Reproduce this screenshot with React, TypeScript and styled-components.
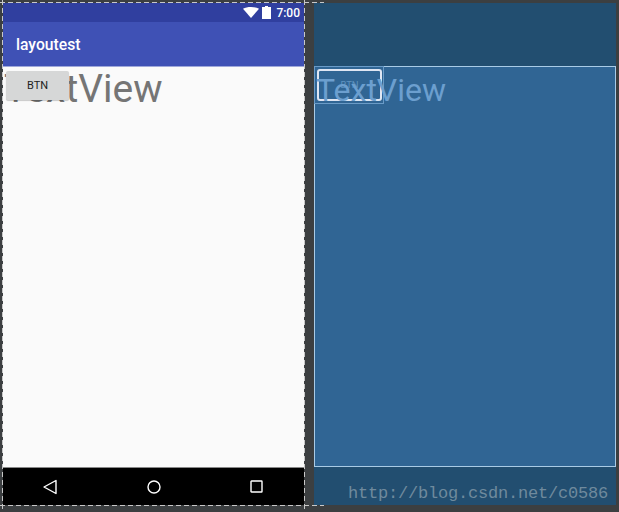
import React from "react";
import styled, { createGlobalStyle } from "styled-components";

const Global = createGlobalStyle`
  html, body { margin: 0; padding: 0; background: #3c3f41; }
  #root { width: 619px; height: 512px; overflow: hidden; }
`;

const Stage = styled.div`
  position: relative;
  width: 619px;
  height: 512px;
  box-sizing: border-box;
  padding: 3px 3px 7px 3px;
  display: flex;
  gap: 10px;
  background: #3c3f41;
  font-family: Roboto, "Liberation Sans", sans-serif;
`;

const Device = styled.div`
  width: 301px;
  display: flex;
  flex-direction: column;
  background: #fafafa;
`;

const StatusBar = styled.div`
  height: 19px;
  flex: none;
  background: #303f9f;
  display: flex;
  align-items: center;
  justify-content: flex-end;
  gap: 3px;
  padding-right: 4px;
  color: #fff;
  font-size: 12px;
  font-weight: 500;
`;

const StatusTime = styled.span`
  margin-left: 2px;
`;

const Toolbar = styled.div`
  height: 45px;
  flex: none;
  box-sizing: border-box;
  background: #3f51b5;
  border-bottom: 1px solid #9fa8da;
  display: flex;
  align-items: center;
  padding: 1px 0 0 13px;
  color: #fff;
  font-size: 15.7px;
  font-weight: 500;
`;

const Content = styled.div`
  position: relative;
  flex: 1;
  padding: 4px 3px;
`;

const TextView = styled.span`
  position: absolute;
  left: 1px;
  top: 1px;
  font-size: 39px;
  line-height: 43px;
  color: #757575;
  white-space: nowrap;
`;

const AppButton = styled.div`
  position: relative;
  z-index: 1;
  width: 63px;
  height: 29px;
  border-radius: 2px;
  background: #d6d7d7;
  box-shadow: 0 1px 1px rgba(0, 0, 0, 0.2);
  display: flex;
  align-items: center;
  justify-content: center;
  color: #222;
  font-size: 11px;
  font-weight: 400;
`;

const NavBar = styled.div`
  height: 38px;
  flex: none;
  box-sizing: border-box;
  background: #000;
  border-top: 1px solid #888;
  display: flex;
  align-items: center;
  justify-content: space-between;
  padding: 0 41px 0 40px;
`;

const Blueprint = styled.div`
  width: 302px;
  display: flex;
  flex-direction: column;
  background: #224e70;
`;

const BlueHeader = styled.div`
  height: 63px;
  flex: none;
`;

const BlueContent = styled.div`
  position: relative;
  height: 401px;
  flex: none;
  box-sizing: border-box;
  background: #306594;
  border: 1px solid #a9cbe6;
`;

const BlueTextBox = styled.div`
  width: 70px;
  height: 38px;
  margin: -1px 0 0 -1px;
  box-sizing: border-box;
  padding: 2px;
  border: 1px solid #6a9bc7;
`;

const BlueTextView = styled.span`
  position: absolute;
  left: 1px;
  top: 2px;
  font-size: 32px;
  line-height: 43px;
  color: #6c9fcf;
  white-space: nowrap;
`;

const BlueButton = styled.div`
  width: 65px;
  height: 32px;
  box-sizing: border-box;
  border: 2px solid #dfe6f3;
  border-radius: 3px;
  display: flex;
  align-items: center;
  justify-content: center;
  padding-bottom: 2px;
  color: #5f93c0;
  font-size: 9.5px;
`;

const BlueFooter = styled.div`
  flex: 1;
  display: flex;
  align-items: flex-end;
  justify-content: flex-end;
  padding: 0 8px 1px 0;
`;

const Watermark = styled.div`
  font-family: "Liberation Mono", monospace;
  font-size: 17px;
  line-height: 20px;
  letter-spacing: -0.2px;
  color: #6f8a9d;
  white-space: nowrap;
`;

const Guides = styled.div`
  position: absolute;
  inset: 0;
  pointer-events: none;
  background-image:
    repeating-linear-gradient(90deg, #c8c8c8 0 5px, transparent 5px 8px),
    repeating-linear-gradient(90deg, #c8c8c8 0 5px, transparent 5px 8px),
    repeating-linear-gradient(180deg, #c8c8c8 0 5px, transparent 5px 8px),
    repeating-linear-gradient(180deg, #c8c8c8 0 5px, transparent 5px 8px);
  background-size: 324px 1px, 324px 1px, 1px 512px, 1px 512px;
  background-position: 0 2px, 0 505px, 2px 0, 304px 0;
  background-repeat: no-repeat;
`;

export default function App() {
  return (
    <>
      <Global />
      <Stage>
        <Device>
          <StatusBar>
            <svg width="16" height="11" viewBox="0 0 16 11">
              <path d="M0 1.7C2 .5 5 0 8 0s6 .5 8 1.7L8 11z" fill="#fff" />
            </svg>
            <svg width="9" height="13" viewBox="0 0 9 13">
              <path d="M3 0h3v1h3v12H0V1h3z" fill="#fff" />
            </svg>
            <StatusTime>7:00</StatusTime>
          </StatusBar>
          <Toolbar>layoutest</Toolbar>
          <Content>
            <TextView>TextView</TextView>
            <AppButton>BTN</AppButton>
          </Content>
          <NavBar>
            <svg width="14" height="16" viewBox="0 0 14 16">
              <path d="M13 1.5v13L1 8z" fill="none" stroke="#fff" strokeWidth="1.4" strokeLinejoin="round" />
            </svg>
            <svg width="14" height="14" viewBox="0 0 14 14">
              <circle cx="7" cy="7" r="6" fill="none" stroke="#fff" strokeWidth="1.4" />
            </svg>
            <svg width="13" height="13" viewBox="0 0 13 13">
              <rect x="1" y="1" width="11" height="11" rx="0.5" fill="none" stroke="#fff" strokeWidth="1.4" />
            </svg>
          </NavBar>
        </Device>
        <Blueprint>
          <BlueHeader />
          <BlueContent>
            <BlueTextBox>
              <BlueButton>BTN</BlueButton>
            </BlueTextBox>
            <BlueTextView>TextView</BlueTextView>
          </BlueContent>
          <BlueFooter>
            <Watermark>http://blog.csdn.net/c0586</Watermark>
          </BlueFooter>
        </Blueprint>
        <Guides />
      </Stage>
    </>
  );
}
